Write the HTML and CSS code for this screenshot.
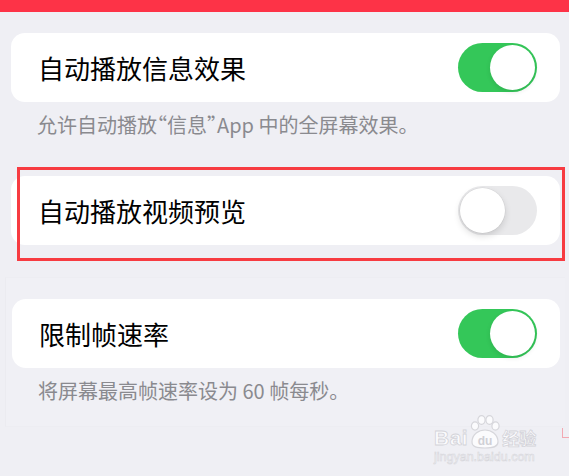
FILE: index.html
```html
<!DOCTYPE html>
<html lang="zh-CN">
<head>
<meta charset="utf-8">
<title>自动播放设置</title>
<link rel="stylesheet" href="styles.css">
</head>
<body>
<div class="topbar"></div>
<main class="page">
  <section class="group group-first">
    <div class="card">
      <span class="label">自动播放信息效果</span>
      <span class="toggle on"><span class="knob"></span></span>
    </div>
    <p class="footer">允许自动播放“信息”App 中的全屏幕效果。</p>
  </section>

  <section class="group group-second">
    <div class="card">
      <span class="label">自动播放视频预览</span>
      <span class="toggle"><span class="knob"></span></span>
    </div>
    <div class="highlight"></div>
  </section>

  <section class="group group-panel">
    <div class="card">
      <span class="label">限制帧速率</span>
      <span class="toggle on"><span class="knob"></span></span>
    </div>
    <p class="footer">将屏幕最高帧速率设为 60 帧每秒。</p>
  </section>
</main>

<div class="watermark">
  <div class="wm-row">
    <span class="wm-bai">Bai</span>
    <svg class="wm-paw" width="34" height="34" viewBox="0 0 34 34">
      <g fill="#fbfbfd" stroke="#d6d6db" stroke-width="1.2">
        <ellipse cx="7" cy="11" rx="3.6" ry="4.2"/>
        <ellipse cx="13.5" cy="5" rx="3.6" ry="4.3"/>
        <ellipse cx="21.5" cy="5" rx="3.6" ry="4.3"/>
        <ellipse cx="27.5" cy="11" rx="3.6" ry="4.2"/>
        <path d="M4 27 C4 19 11 15 17 15 C23 15 30 19 30 27 C30 32 25 33 17 33 C9 33 4 32 4 27 Z"/>
      </g>
      <text x="17" y="30" text-anchor="middle" font-family="Liberation Sans, sans-serif" font-weight="700" font-size="12" fill="#d0d0d6">du</text>
    </svg>
    <span class="wm-jy">经验</span>
  </div>
  <div class="wm-url">jingyan.baidu.com</div>
</div>
<div class="corner-mark"></div>
</body>
</html>
```

FILE: styles.css
```css
* { box-sizing: border-box; }

html, body {
  margin: 0;
  padding: 0;
}

body {
  width: 569px;
  height: 476px;
  overflow: hidden;
  background: #efeff4;
  font-family: "Noto Sans CJK SC", "Noto Sans", sans-serif;
  position: relative;
}

.topbar {
  height: 12px;
  background: #fd3347;
}

.page {
  padding: 0 4px 0 5px;
}

.group {
  padding: 0 5px 0 6px;
}

.group-first {
  padding-top: 21px;
}

.group-second {
  margin-top: 38px;
  position: relative;
}

.group-panel {
  margin-top: 32px;
  padding-top: 21px;
  padding-bottom: 22px;
  background: #f0f0f5;
  border-left: 1px solid #ebebf0;
  border-top: 1px solid #ededf2;
  border-bottom: 1px solid #ededf2;
}

.card {
  height: 69px;
  background: #ffffff;
  border-radius: 14px;
  display: flex;
  align-items: center;
  justify-content: space-between;
  padding: 0 23px 0 27px;
}

.label {
  font-size: 26px;
  color: #000;
  line-height: 1;
}

.footer {
  margin: 10px 0 0;
  padding-left: 26px;
  font-size: 20px;
  line-height: 26px;
  color: #8a8a8f;
  font-feature-settings: "halt" 1;
}

.toggle {
  width: 79px;
  height: 49px;
  border-radius: 25px;
  background: #e9e9eb;
  display: flex;
  align-items: center;
  padding: 0 2px;
  flex: none;
}

.toggle.on {
  background: #34c759;
  justify-content: flex-end;
}

.knob {
  width: 45px;
  height: 45px;
  border-radius: 50%;
  background: #fff;
  box-shadow: 0 3px 7px rgba(0, 0, 0, 0.14), 0 0 0 0.6px rgba(0, 0, 0, 0.06);
}

.toggle.on .knob {
  box-shadow: 0 2px 5px rgba(0, 0, 0, 0.1);
}

.highlight {
  position: absolute;
  left: 12px;
  top: -9px;
  width: 548px;
  height: 94px;
  border: 3px solid #f73b41;
}

.watermark {
  position: absolute;
  left: 434px;
  top: 414px;
  display: flex;
  flex-direction: column;
  align-items: flex-start;
}

.wm-row {
  display: flex;
  align-items: flex-end;
  height: 34px;
}

.wm-bai {
  font-family: "Liberation Sans", sans-serif;
  font-weight: 700;
  font-size: 21px;
  line-height: 20px;
  color: #fbfbfd;
  -webkit-text-stroke: 0.8px #d3d3d9;
  letter-spacing: 0.5px;
}

.wm-paw {
  display: block;
  margin: 0 0 -1px 0;
}

.wm-jy {
  font-family: "Noto Sans CJK SC", sans-serif;
  font-weight: 700;
  font-size: 17px;
  line-height: 20px;
  color: #fbfbfd;
  -webkit-text-stroke: 0.8px #d3d3d9;
}

.wm-url {
  margin-top: 3px;
  font-family: "Liberation Sans", sans-serif;
  font-size: 12.5px;
  line-height: 12px;
  color: #fbfbfd;
  -webkit-text-stroke: 0.6px #d6d6db;
}

.corner-mark {
  position: absolute;
  left: 562px;
  top: 428px;
  width: 8px;
  height: 10px;
  border-left: 1px solid #f3a9b2;
  border-bottom: 1px solid #f3a9b2;
}
```
